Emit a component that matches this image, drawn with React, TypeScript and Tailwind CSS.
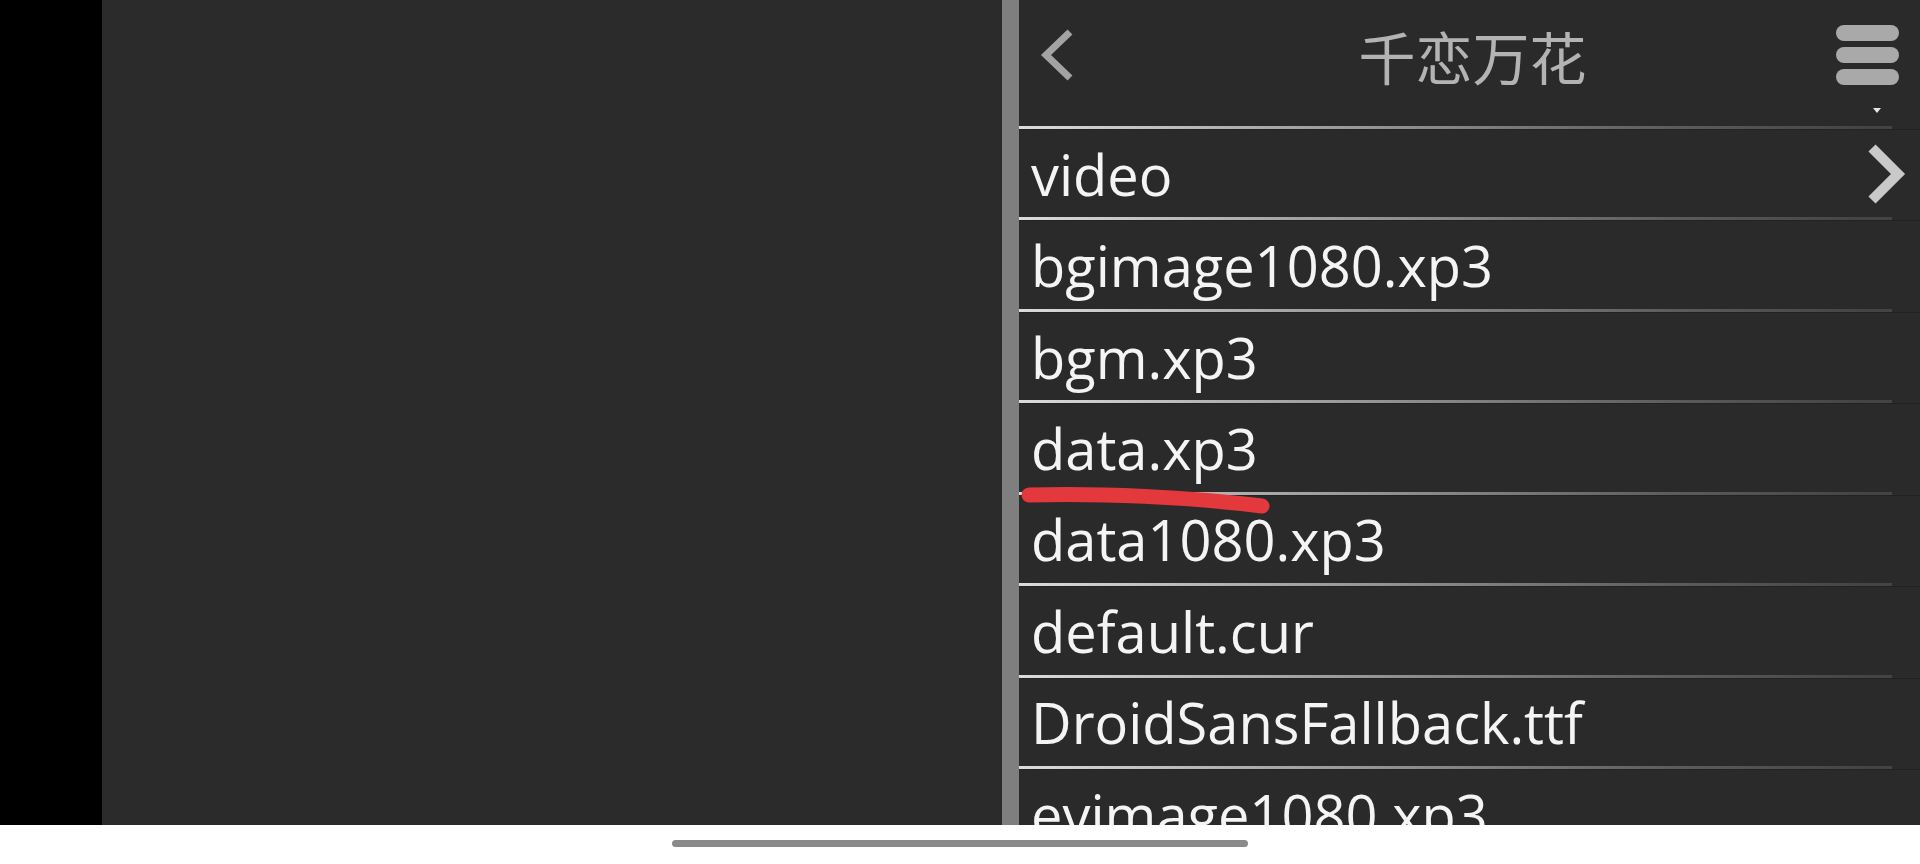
const files = [
  "video",
  "bgimage1080.xp3",
  "bgm.xp3",
  "data.xp3",
  "data1080.xp3",
  "default.cur",
  "DroidSansFallback.ttf",
  "evimage1080.xp3",
];

function Divider() {
  return (
    <div className="h-[4px] shrink-0 flex flex-col">
      <div className="h-[3px] bg-gradient-to-r from-[#dcdcdc] via-[#5c5c5c] via-75% to-[#444444] to-97% mr-[28px]" />
      <div className="h-[1px] bg-[#222222]" />
    </div>
  );
}

function FileRow({ name, folder }: { name: string; folder?: boolean }) {
  return (
    <>
      <Divider />
      <div className="h-[87.43px] shrink-0 flex items-center justify-between pl-[12px] pr-[14px]">
        <span className="text-[56px] text-[#f4f4f4] font-['Open_Sans',sans-serif] whitespace-nowrap leading-none">
          {name}
        </span>
        {folder && (
          <svg width="38" height="60" viewBox="0 0 38 60">
            <polyline points="4,4 30,30 4,56" fill="none" stroke="#c9c9c9" strokeWidth="10" strokeLinejoin="miter" />
          </svg>
        )}
      </div>
    </>
  );
}

export default function App() {
  return (
    <div className="w-[1920px] h-[864px] flex flex-col bg-white overflow-hidden">
      <div className="h-[825px] flex shrink-0">
        <div className="w-[102px] bg-black" />
        <div className="w-[900px] bg-[#2b2b2b]" />
        <div className="w-[17px] bg-[#7f7f7f]" />
        <div className="flex-1 bg-[#2a2a2a] flex flex-col overflow-hidden relative">
          <div className="h-[126px] shrink-0 relative flex items-center justify-between pl-[19px] pr-[21px] pb-[16px]">
            <svg width="38" height="52" viewBox="0 0 38 52">
              <polyline points="32,3 8,26 32,49" fill="none" stroke="#a3a3a3" strokeWidth="7" />
            </svg>
            <div className="absolute inset-x-0 top-0 h-[111px] flex items-center justify-center pl-[6px]">
              <span className="text-[57px] leading-[57px] text-[#b3b3b3] font-['Noto_Sans_CJK_SC','Noto_Sans',sans-serif]">
                千恋万花
              </span>
            </div>
            <div className="flex flex-col gap-[6px]">
              <div className="w-[63px] h-[16px] rounded-[8px] bg-[#a9a9a9]" />
              <div className="w-[63px] h-[16px] rounded-[8px] bg-[#a9a9a9]" />
              <div className="w-[63px] h-[16px] rounded-[8px] bg-[#a9a9a9]" />
            </div>
            <div className="absolute right-[39px] top-[108px] w-0 h-0 border-l-[4px] border-r-[4px] border-t-[5px] border-l-transparent border-r-transparent border-t-[#e6e6e6]" />
          </div>
          {files.map((f, i) => (
            <FileRow key={f} name={f} folder={i === 0} />
          ))}
          <svg className="absolute left-0 top-0 pointer-events-none" width="901" height="825" viewBox="0 0 901 825">
            <path d="M 10 495 C 80 493 170 497 243 506" fill="none" stroke="#e4393c" strokeWidth="15" strokeLinecap="round" />
          </svg>
        </div>
      </div>
      <div className="flex-1 flex justify-center pt-[15px]">
        <div className="w-[576px] h-[7px] rounded-full bg-[#8a8a8a]" />
      </div>
    </div>
  );
}
